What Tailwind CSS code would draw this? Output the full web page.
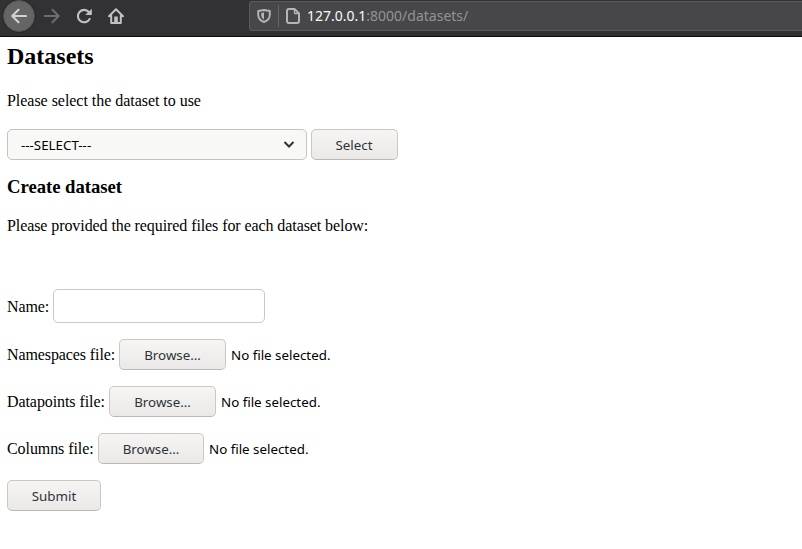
<!DOCTYPE html>
<html lang="en">
<head>
<meta charset="utf-8">
<title>Datasets</title>
<script src="https://cdn.jsdelivr.net/npm/@tailwindcss/browser@4"></script>
</head>
<body class="h-[549px] overflow-hidden bg-white text-black">
<header class="flex h-[37px] items-start border-b border-[#0c0c0d] bg-[#323234] font-['Noto_Sans',sans-serif]">
  <nav class="flex w-[249px] items-center text-[#c2c2c3]">
    <button class="ml-[3px] flex size-8 items-center justify-center rounded-full border border-[#505051] bg-[#656566] ring-1 ring-[#29292a]" aria-label="Back">
      <svg class="size-4 text-[#d2d2d3]" viewBox="0 0 16 16" fill="none" stroke="currentColor" stroke-width="2.100" stroke-linecap="round" stroke-linejoin="round"><path d="M15 8H1.500M7.500 1.800 1.300 8l6.200 6.200"/></svg>
    </button>
    <svg class="ml-[9px] size-4 text-[#6d6d6e]" viewBox="0 0 16 16" fill="none" stroke="currentColor" stroke-width="2.100" stroke-linecap="round" stroke-linejoin="round"><path d="M1 8h13.500M8.500 1.800 14.700 8l-6.200 6.200"/></svg>
    <svg class="ml-4 size-4" viewBox="0 0 16 16" fill="none" stroke="currentColor" stroke-width="2.100" stroke-linecap="round"><path d="M13.600 11A6.200 6.200 0 1 1 12.800 4"/><path d="M15.800.8V7H9.200z" fill="currentColor" stroke="none"/></svg>
    <svg class="ml-4 size-4" viewBox="0 0 16 16" fill="none" stroke="currentColor" stroke-width="2" stroke-linecap="round" stroke-linejoin="round"><path d="M1 8.200 8 1.200l7 7M3.200 7.500V15h9.600V7.500"/><path d="M6.200 8.500h3.600V15H6.200z" fill="currentColor" stroke="none"/></svg>
  </nav>
  <div class="mt-px flex h-[30px] flex-1 items-center rounded-l-[3px] border border-r-0 border-[#59595b] bg-[#474749]">
    <svg class="ml-[7px] size-[14px] text-[#b5b5b6]" viewBox="0 0 14 14" fill="none" stroke="currentColor" stroke-width="1.900" stroke-linejoin="round"><path d="M7 1 12.800 2v3.800c0 3.200-2 5.900-5.800 7.200C3.200 11.700 1.200 9 1.200 5.800V2z"/><path d="M7 3.500v7C5.200 9.500 4.200 7.800 4.200 5.700V4z" fill="currentColor" stroke="none"/></svg>
    <span class="ml-[7px] h-[22px] w-px bg-[#67676a]"></span>
    <svg class="ml-[7px] h-4 w-[14px] text-[#b5b5b6]" viewBox="0 0 14 16" fill="none" stroke="currentColor" stroke-width="2" stroke-linejoin="round"><path d="M3 1h5.500L13 5.500V13a2 2 0 0 1-2 2H3a2 2 0 0 1-2-2V3a2 2 0 0 1 2-2z"/><path d="M8.500 1v4.500H13" stroke-width="1.300"/></svg>
    <span class="ml-[7px] text-[14px] leading-5 text-[#f9f9fa]">127.0.0.1<span class="text-[#939395]">:8000/datasets/</span></span>
  </div>
</header>
<main class="flex flex-col px-[7px] pt-[5px] font-['Liberation_Serif',serif] text-[16px] leading-[18px]">
  <h2 class="text-[24px] leading-7 font-bold">Datasets</h2>
  <p class="mt-[22px] tracking-[-0.035px]">Please select the dataset to use</p>
  <form class="mt-[19px] flex gap-1 font-['Noto_Sans',sans-serif] text-[13.333px]">
    <button type="button" class="flex h-[31px] w-[300px] items-center justify-between rounded-[5px] border border-[#c6c2bd] bg-[#f8f8f7] pr-[11px] pl-[13px]"><span>---SELECT---</span>
      <svg class="h-3 w-3" viewBox="0 0 12 12" fill="none" stroke="#2e3436" stroke-width="2"><path d="m1.500 3 4.500 4.500L10.500 3"/></svg>
    </button>
    <button type="button" class="h-[31px] w-[87px] rounded-[5px] border border-[#cdc7c2] border-b-[#bfb8b1] bg-linear-to-b from-[#f6f5f4] to-[#ebe9e8] pr-px text-[#2e3436]">Select</button>
  </form>
  <h3 class="mt-4 text-[18.720px] leading-[22px] font-bold tracking-[-0.03px]">Create dataset</h3>
  <p class="mt-[19px] tracking-[-0.085px]">Please provided the required files for each dataset below:</p>
  <form class="mt-[54px] flex flex-col items-start gap-4">
    <label class="flex h-[34px] items-center"><span class="w-[46px] pt-0.5 tracking-[-0.1px]">Name:</span><input type="text" class="h-[34px] w-[212px] rounded-[5px] border border-[#cdc7c2] bg-white"></label>
    <div class="flex h-[31px] items-center"><span class="w-[112px] tracking-[-0.1px]">Namespaces file:</span><button type="button" class="h-[31px] w-[107px] rounded-[5px] border border-[#cdc7c2] border-b-[#bfb8b1] bg-linear-to-b from-[#f6f5f4] to-[#ebe9e8] font-['Noto_Sans',sans-serif] text-[13.333px] text-[#2e3436]">Browse…</button><span class="ml-[5px] font-['Noto_Sans',sans-serif] text-[13.333px]">No file selected.</span></div>
    <div class="flex h-[31px] items-center"><span class="w-[102px] tracking-[-0.08px]">Datapoints file:</span><button type="button" class="h-[31px] w-[107px] rounded-[5px] border border-[#cdc7c2] border-b-[#bfb8b1] bg-linear-to-b from-[#f6f5f4] to-[#ebe9e8] font-['Noto_Sans',sans-serif] text-[13.333px] text-[#2e3436]">Browse…</button><span class="ml-[5px] font-['Noto_Sans',sans-serif] text-[13.333px]">No file selected.</span></div>
    <div class="flex h-[31px] items-center"><span class="w-[91px] tracking-[-0.08px]">Columns file:</span><button type="button" class="h-[31px] w-[106px] rounded-[5px] border border-[#cdc7c2] border-b-[#bfb8b1] bg-linear-to-b from-[#f6f5f4] to-[#ebe9e8] font-['Noto_Sans',sans-serif] text-[13.333px] text-[#2e3436]">Browse…</button><span class="ml-[5px] font-['Noto_Sans',sans-serif] text-[13.333px]">No file selected.</span></div>
    <button type="button" class="h-[31px] w-[94px] rounded-[5px] border border-[#cdc7c2] border-b-[#bfb8b1] bg-linear-to-b from-[#f6f5f4] to-[#ebe9e8] font-['Noto_Sans',sans-serif] text-[13.333px] text-[#2e3436]">Submit</button>
  </form>
</main>
</body>
</html>
